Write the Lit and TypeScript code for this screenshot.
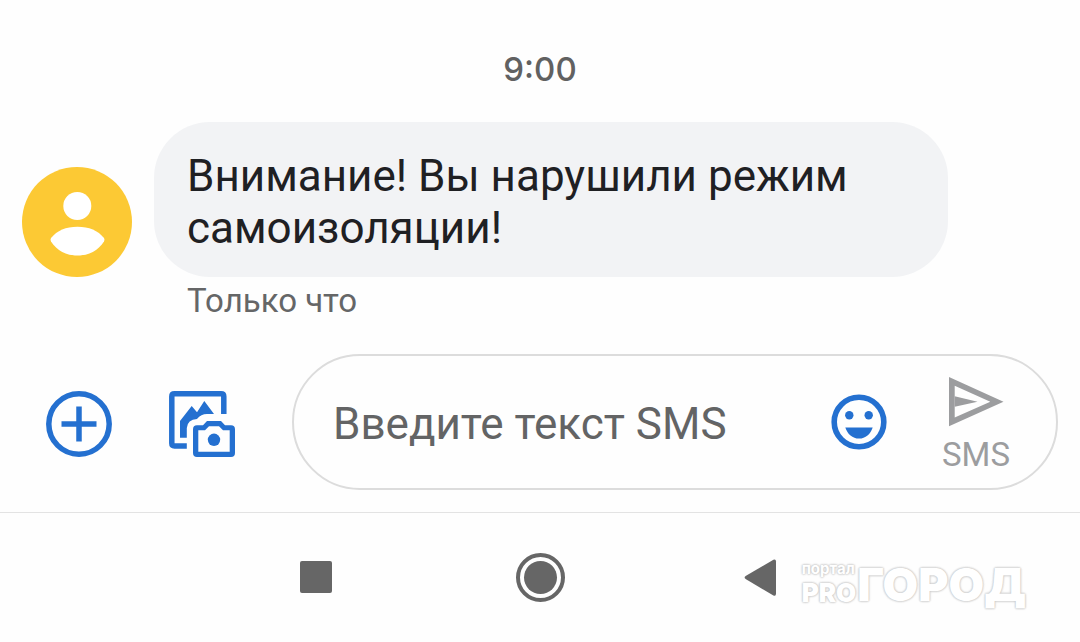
import { LitElement, html, css } from "lit";
import { customElement, property, state } from "lit/decorators.js";

@customElement("chat-message")
class ChatMessage extends LitElement {
  @property() text = "";
  @property() status = "";

  static styles = css`
    :host { display: block; }
    .row { display: flex; align-items: flex-end; gap: 22px; }
    .avatar { flex: none; width: 110px; height: 110px; display: block; }
    .bubble {
      margin: 0;
      max-width: 728px;
      padding: 28px 33px 23px;
      border-radius: 56px;
      background: #f2f3f5;
      color: #1f2023;
      font-size: 44px;
      line-height: 52px;
    }
    .status {
      margin: 4px 0 0;
      padding-left: 165px;
      color: #656667;
      font-size: 33px;
      line-height: 40px;
    }
  `;

  render() {
    return html`
      <div class="row">
        <svg class="avatar" viewBox="0 0 110 110" aria-hidden="true">
          <circle cx="55" cy="55" r="55" fill="#fcc934" />
          <circle cx="55.3" cy="39" r="14" fill="#fff" />
          <path fill="#fff" d="M29 71C35 63.500 44 59.700 55.500 59.700S76 63.500 82 71Q83 72.700 82 74.400C76 83.500 67 88.500 55.500 88.500S35 83.500 29 74.400Q28 72.700 29 71Z" />
        </svg>
        <p class="bubble">${this.text}</p>
      </div>
      <p class="status">${this.status}</p>
    `;
  }
}

@customElement("message-composer")
class MessageComposer extends LitElement {
  @state() private draft = "";

  static styles = css`
    :host { display: block; }
    .bar { display: flex; align-items: center; gap: 57px; margin: 0; padding: 0 22px 0 46px; }
    button { border: 0; padding: 0; background: none; color: #2470d0; font: inherit; cursor: pointer; }
    svg { display: block; }
    .tool { flex: none; width: 66px; height: 66px; margin-top: 4px; }
    .field {
      flex: 1;
      min-width: 0;
      box-sizing: border-box;
      display: flex;
      align-items: center;
      height: 136px;
      padding: 0 46px 0 39px;
      border: 2px solid #dcdcdc;
      border-radius: 68px;
    }
    input {
      flex: 1;
      min-width: 0;
      height: 60px;
      border: 0;
      padding: 4px 0 0;
      outline: 0;
      background: none;
      color: #1f2023;
      font: inherit;
      font-size: 44px;
    }
    input::placeholder { color: #636465; opacity: 1; }
    .emoji { flex: none; margin-right: 55px; }
    .send { flex: none; display: flex; flex-direction: column; gap: 8px; padding-top: 7px; color: #9c9d9f; font-size: 33px; line-height: 40px; }
    .arrow { margin-left: 7px; }
  `;

  render() {
    return html`
      <form class="bar" @submit=${(e: Event) => e.preventDefault()}>
        <button class="tool" type="button" aria-label="Добавить">
          <svg width="66" height="66" viewBox="0 0 66 66" fill="none" stroke="currentColor" stroke-width="5.5">
            <circle cx="33" cy="33" r="30.2" />
            <path d="M33 15.5v35M15.5 33h35" />
          </svg>
        </button>
        <button class="tool" type="button" aria-label="Галерея и камера">
          <svg width="66" height="66" viewBox="0 0 66 66" fill="currentColor">
            <path fill="none" stroke="currentColor" stroke-width="5.5" d="M17.8 55H5.5Q2.8 55 2.8 52.3V5.5Q2.8 2.8 5.5 2.8H52Q54.8 2.8 54.8 5.5V23" />
            <path d="M11 46.8V30L22.7 15L28 21.3L35.3 10L45 23H38Q32 23 28 28Q18.500 28.500 17.8 37V46.8Z" />
            <path fill-rule="evenodd" d="M38 30H52L56 34.2H62Q66 34.2 66 38.2V62Q66 66 62 66H28Q24 66 24 62V38.2Q24 34.2 28 34.2H34ZM40 35.3L36 39.3H29.3V60.7H60.7V39.3H54L50 35.3Z" />
            <circle cx="45" cy="48.8" r="6.2" />
          </svg>
        </button>
        <div class="field">
          <input
            type="text"
            aria-label="Введите текст SMS"
            placeholder="Введите текст SMS"
            .value=${this.draft}
            @input=${(e: Event) => (this.draft = (e.target as HTMLInputElement).value)}
          />
          <button class="emoji" type="button" aria-label="Эмодзи">
            <svg width="56" height="56" viewBox="0 0 56 56" fill="currentColor">
              <circle cx="28" cy="28" r="24.8" fill="none" stroke="currentColor" stroke-width="5.6" />
              <circle cx="18.3" cy="21.3" r="4.2" />
              <circle cx="37.7" cy="21.3" r="4.2" />
              <path d="M14.3 33.4H41.7C39.6 40 34.5 44.5 28 44.5S16.4 40 14.3 33.4Z" />
            </svg>
          </button>
          <button class="send" type="submit">
            <svg class="arrow" width="55" height="50" viewBox="0 0 55 50" fill="currentColor" aria-hidden="true">
              <path fill-rule="evenodd" d="M0 0L54.5 24.7L0 49.3ZM5.7 8.7V40.6L41.3 24.7Z" />
              <path d="M5.7 19.3L28.5 24.7L5.7 29.8Z" />
            </svg>
            <span>SMS</span>
          </button>
        </div>
      </form>
    `;
  }
}

@customElement("system-nav")
class SystemNav extends LitElement {
  static styles = css`
    :host { display: block; position: relative; border-top: 1px solid #e3e3e3; }
    nav { display: flex; justify-content: center; gap: 172px; padding: 40px 0; }
    button { width: 50px; height: 50px; border: 0; padding: 0; background: none; color: #666; cursor: pointer; }
    svg { display: block; }
    .mark {
      position: absolute;
      right: 54px;
      top: 46px;
      display: flex;
      align-items: center;
      gap: 1px;
      color: #fff;
      font-family: Inter, sans-serif;
      font-weight: 900;
      text-shadow: 0 0 2px #c8c8c8, 0 0 2px #c8c8c8, 0 0 3px #d4d4d4;
    }
    .small { display: flex; flex-direction: column; }
    .portal { font-size: 15px; line-height: 18px; font-weight: 700; }
    .pro { font-size: 26px; line-height: 30px; }
    .city { font-size: 46px; line-height: 50px; }
  `;

  render() {
    return html`
      <nav aria-label="Навигация">
        <button type="button" aria-label="Недавние">
          <svg width="50" height="50" viewBox="0 0 50 50" fill="currentColor"><rect x="7" y="8" width="32" height="32" rx="2" /></svg>
        </button>
        <button type="button" aria-label="Домой">
          <svg width="50" height="50" viewBox="0 0 50 50" fill="currentColor">
            <circle cx="25.5" cy="24.5" r="22.5" fill="none" stroke="currentColor" stroke-width="4" />
            <circle cx="25.5" cy="24.5" r="16.5" />
          </svg>
        </button>
        <button type="button" aria-label="Назад">
          <svg width="50" height="50" viewBox="0 0 50 50" fill="currentColor">
            <path d="M8.6 23.1L36.4 6.8Q39 5.8 39 8.5V40.8Q39 43.5 36.4 42.4L8.6 26.1Q6.6 24.6 8.6 23.1Z" />
          </svg>
        </button>
      </nav>
      <div class="mark">
        <div class="small"><span class="portal">портал</span><span class="pro">PRO</span></div>
        <span class="city">ГОРОД</span>
      </div>
    `;
  }
}

@customElement("app-root")
class AppRoot extends LitElement {
  static styles = css`
    :host {
      display: flex;
      flex-direction: column;
      min-height: 100vh;
      background: #fefefe;
      font-family: Roboto, sans-serif;
    }
    .time {
      margin: 0;
      padding: 49px 0 33px;
      text-align: center;
      color: #616161;
      font: 500 33px/40px Inter, sans-serif;
    }
    .message { padding: 0 22px; }
    .composer { margin: 33px 0 22px; }
  `;

  render() {
    return html`
      <time class="time" datetime="09:00">9:00</time>
      <chat-message class="message" text="Внимание! Вы нарушили режим самоизоляции!" status="Только что"></chat-message>
      <message-composer class="composer"></message-composer>
      <system-nav></system-nav>
    `;
  }
}
